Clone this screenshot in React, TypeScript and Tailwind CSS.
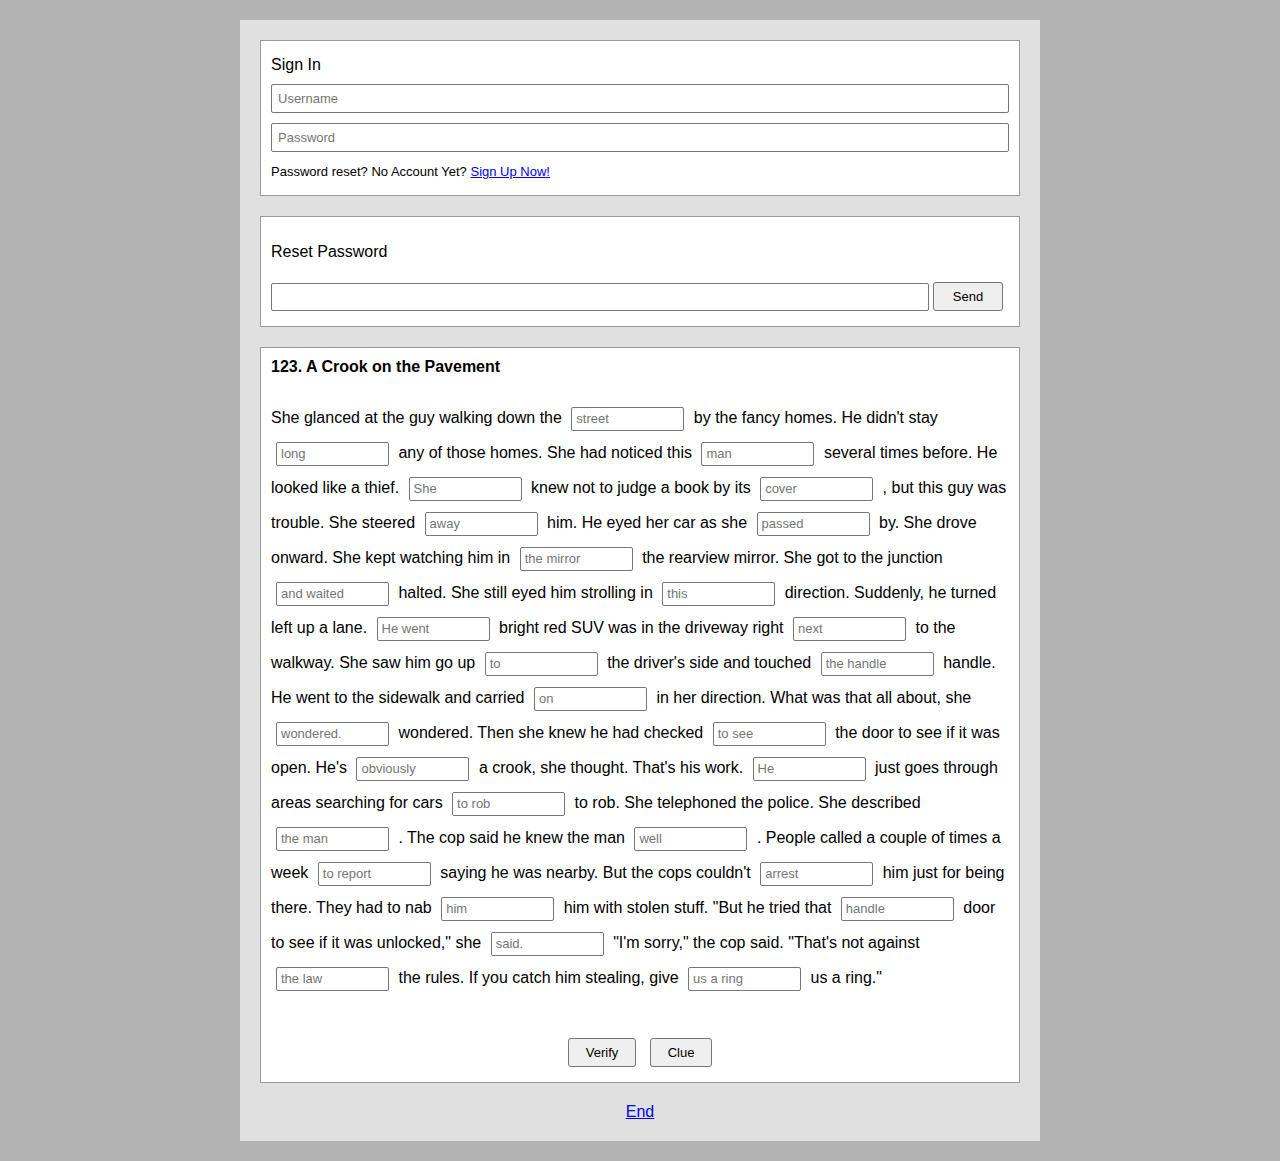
import type { ReactNode } from "react";

type Seg = string | { b: string };

const story: Seg[][] = [
  ["She glanced at the guy walking down the", { b: "street" }, "by the fancy homes. He didn't stay"],
  [{ b: "long" }, "any of those homes. She had noticed this", { b: "man" }, "several times before. He"],
  ["looked like a thief.", { b: "She" }, "knew not to judge a book by its", { b: "cover" }, ", but this guy was"],
  ["trouble. She steered", { b: "away" }, "him. He eyed her car as she", { b: "passed" }, "by. She drove"],
  ["onward. She kept watching him in", { b: "the mirror" }, "the rearview mirror. She got to the junction"],
  [{ b: "and waited" }, "halted. She still eyed him strolling in", { b: "this" }, "direction. Suddenly, he turned"],
  ["left up a lane.", { b: "He went" }, "bright red SUV was in the driveway right", { b: "next" }, "to the"],
  ["walkway. She saw him go up", { b: "to" }, "the driver's side and touched", { b: "the handle" }, "handle."],
  ["He went to the sidewalk and carried", { b: "on" }, "in her direction. What was that all about, she"],
  [{ b: "wondered." }, "wondered. Then she knew he had checked", { b: "to see" }, "the door to see if it was"],
  ["open. He's", { b: "obviously" }, "a crook, she thought. That's his work.", { b: "He" }, "just goes through"],
  ["areas searching for cars", { b: "to rob" }, "to rob. She telephoned the police. She described"],
  [{ b: "the man" }, ". The cop said he knew the man", { b: "well" }, ". People called a couple of times a"],
  ["week", { b: "to report" }, "saying he was nearby. But the cops couldn't", { b: "arrest" }, "him just for being"],
  ["there. They had to nab", { b: "him" }, "him with stolen stuff. \"But he tried that", { b: "handle" }, "door"],
  ["to see if it was unlocked,\" she", { b: "said." }, "\"I'm sorry,\" the cop said. \"That's not against"],
  [{ b: "the law" }, "the rules. If you catch him stealing, give", { b: "us a ring" }, "us a ring.\""],
];

function Blank({ hint }: { hint: string }) {
  return (
    <input
      type="text"
      placeholder={hint}
      className="mx-[5px] inline-block h-[24px] w-[113px] rounded-[2px] border border-[#767676] bg-white px-[4px] align-middle text-[13px] leading-[16px] outline-none placeholder:text-[#757575]"
    />
  );
}

function Line({ segs }: { segs: Seg[] }) {
  const out: ReactNode[] = [];
  segs.forEach((s, i) => {
    if (i > 0) out.push(" ");
    out.push(typeof s === "string" ? <span key={i}>{s}</span> : <Blank key={i} hint={s.b} />);
  });
  return <div className="h-[35px] whitespace-nowrap leading-[35px]">{out}</div>;
}

function Panel({ className, children }: { className?: string; children: ReactNode }) {
  return <div className={"border border-[#9a9a9a] bg-white px-[10px] " + (className ?? "")}>{children}</div>;
}

export default function App() {
  return (
    <div className="min-h-screen bg-[#b3b3b3] py-5 font-['Liberation_Sans',Arial,sans-serif] text-black">
      <div className="mx-auto w-[800px] bg-[#e0e0e0] px-5 pb-[20px] pt-5">
        <Panel className="pb-[16px] pt-[15px]">
          <div className="text-[16px] leading-[18px]">Sign In</div>
          <input
            placeholder="Username"
            className="mt-[10px] block h-[29px] w-full rounded-[2px] border border-[#767676] px-[6px] text-[13px] outline-none placeholder:text-[#757575]"
          />
          <input
            type="password"
            placeholder="Password"
            className="mt-[10px] block h-[29px] w-full rounded-[2px] border border-[#767676] px-[6px] text-[13px] outline-none placeholder:text-[#757575]"
          />
          <div className="mt-[12px] text-[13px] leading-[15px]">
            Password reset? No Account Yet?{" "}
            <a href="#" className="text-[#0000ee] underline">
              Sign Up Now!
            </a>
          </div>
        </Panel>

        <Panel className="mt-5 pb-[15px] pt-[26px]">
          <div className="text-[16px] leading-[18px]">Reset Password</div>
          <div className="mt-[21px] flex items-center">
            <input className="h-[28px] w-[658px] rounded-[2px] border border-[#767676] px-[6px] text-[13px] outline-none" />
            <button className="ml-[4px] h-[29px] w-[70px] rounded-[3px] border border-[#767676] bg-[#efefef] text-[13px]">
              Send
            </button>
          </div>
        </Panel>

        <Panel className="mt-5 pb-[15px] pt-[10px]">
          <div className="text-[16px] font-bold leading-[18px]">123. A Crook on the Pavement</div>
          <div className="mt-[24px] text-[16px]">
            {story.map((segs, i) => (
              <Line key={i} segs={segs} />
            ))}
          </div>
          <div className="mt-[43px] flex justify-center gap-[14px]">
            <button className="h-[29px] w-[68px] rounded-[3px] border border-[#767676] bg-[#efefef] text-[13px]">
              Verify
            </button>
            <button className="h-[29px] w-[62px] rounded-[3px] border border-[#767676] bg-[#efefef] text-[13px]">
              Clue
            </button>
          </div>
        </Panel>

        <div className="mt-[20px] text-center text-[16px] leading-[18px]">
          <a href="#" className="text-[#0000ee] underline">
            End
          </a>
        </div>
      </div>
    </div>
  );
}
